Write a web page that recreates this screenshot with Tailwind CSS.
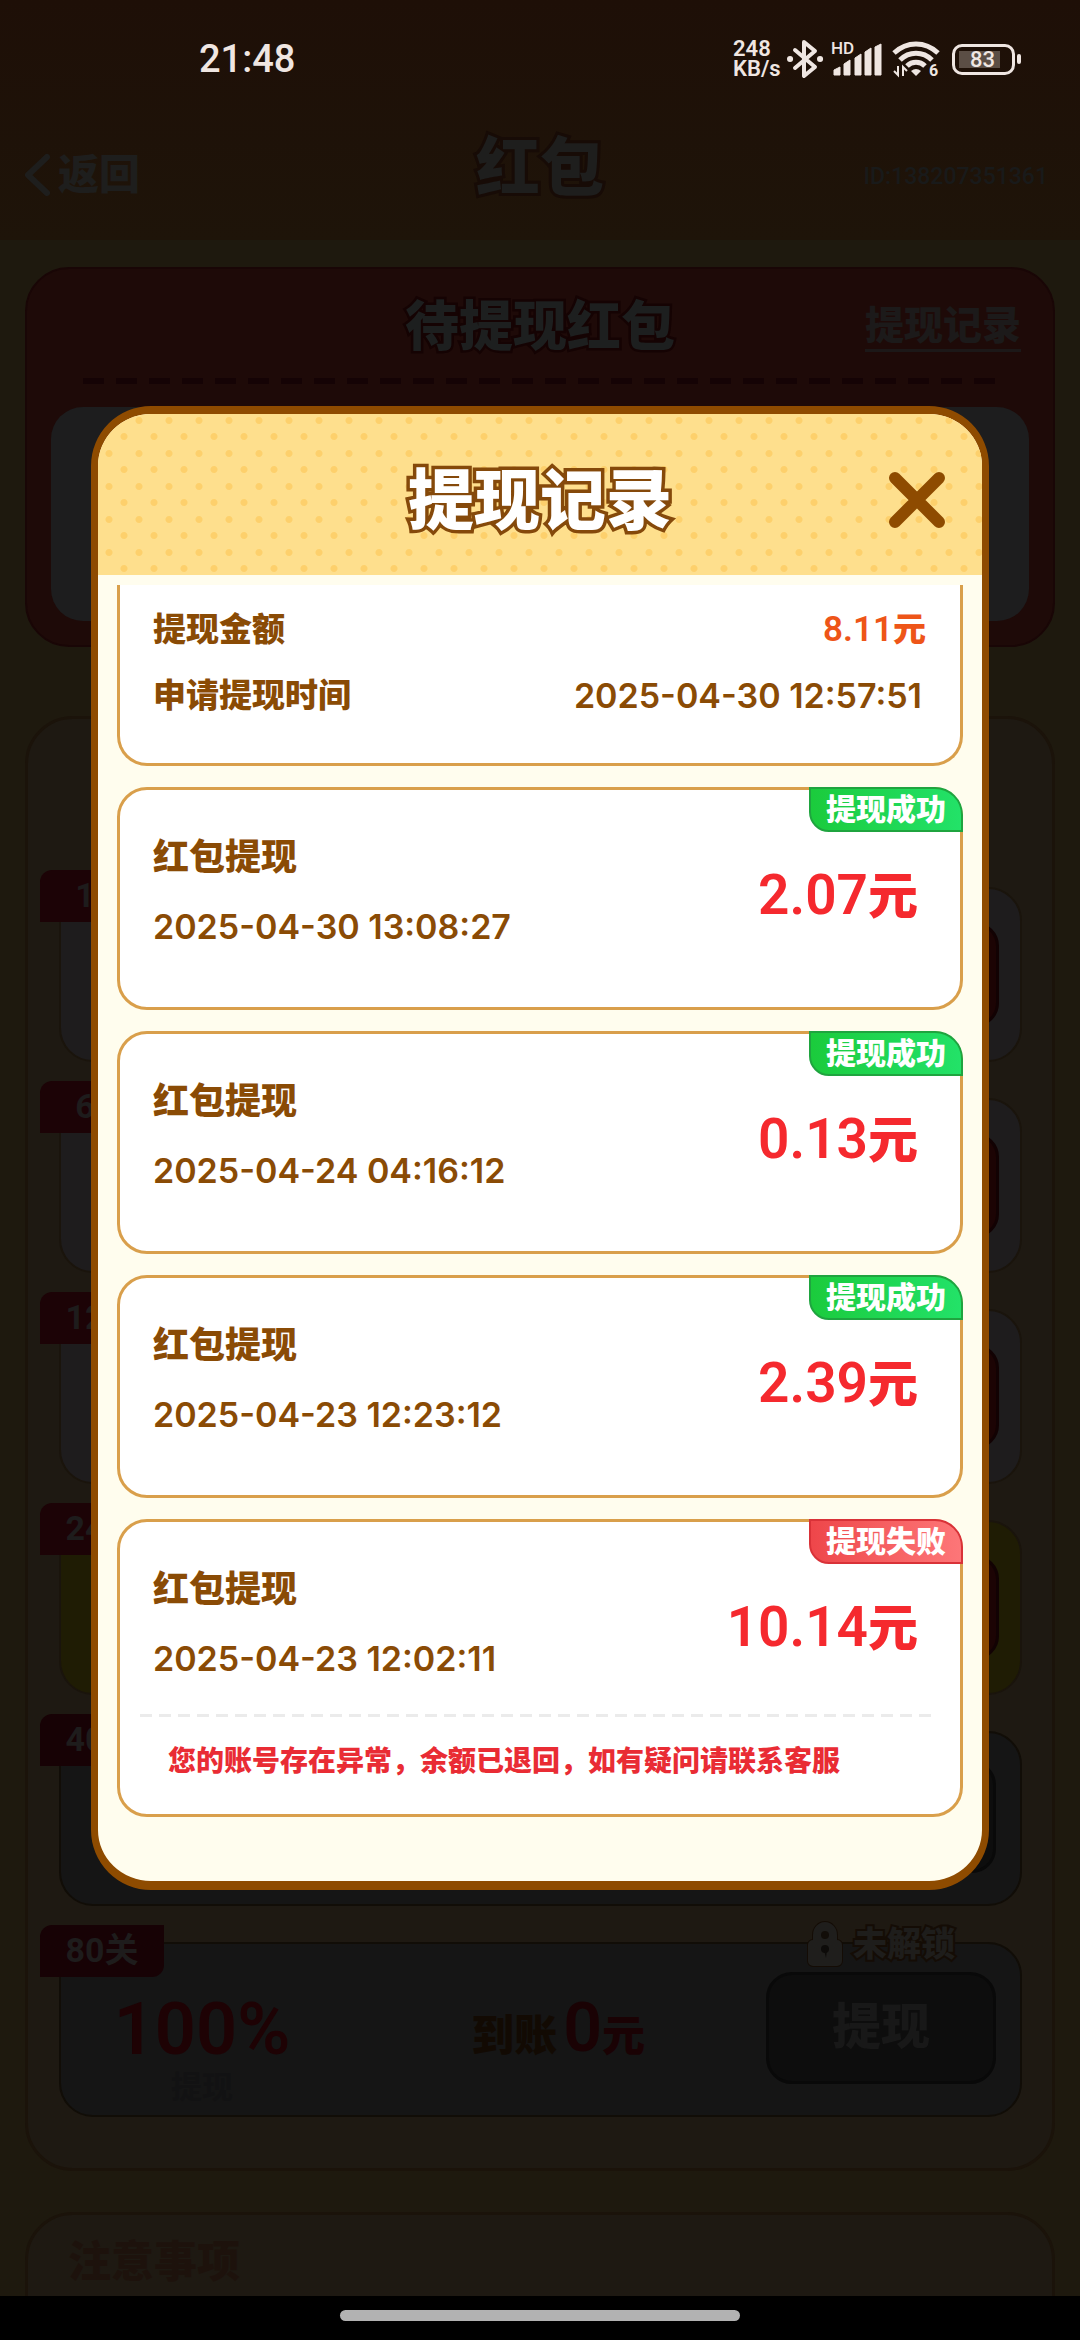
<!DOCTYPE html>
<html lang="zh-CN">
<head>
<meta charset="utf-8">
<meta name="viewport" content="width=device-width, initial-scale=1">
<title>提现记录</title>
<script src="https://cdn.jsdelivr.net/npm/@tailwindcss/browser@4"></script>
</head>
<body class="flex h-screen flex-col overflow-hidden bg-[#1e190e] font-['Roboto','Noto_Sans_CJK_SC',sans-serif] font-black">

<!-- Top of the page: status bar and title bar -->
<div class="shrink-0 bg-linear-to-b from-[#1e0f07] to-[#1e1409]">
  <div class="flex h-[118px] items-center justify-between pr-[59px] pl-[199px] text-[#efe6e2]">
    <time class="text-[38px] leading-[42px] font-medium">21:48</time>
    <div class="flex items-center">
      <div class="w-[53px] text-[22px] leading-5 font-semibold"><p>248</p><p>KB/s</p></div>
      <svg class="h-10 w-[38px]" viewBox="0 0 38 40" fill="none" stroke="currentColor" stroke-width="4" stroke-linejoin="round" stroke-linecap="round" aria-label="蓝牙"><path d="M9 11 29 28 18 37V3L29 12 9 29"/><path d="M4 20h.1M34 20h.1" stroke-width="6"/></svg>
      <svg class="ml-[7px] h-10 w-[52px]" viewBox="0 0 52 40" fill="currentColor" aria-label="信号"><text x="0" y="15" font-family="Roboto" font-size="17" font-weight="500">HD</text><path d="M3 31l6-3v8H3zM13 25l6-4v15h-6zM24 19l6-4v21h-6zM34 13l6-4v27h-6zM44 8l6-3v31h-6z" stroke="currentColor" stroke-linejoin="round"/></svg>
      <svg class="ml-2 h-11 w-[50px]" viewBox="0 -2 50 44" fill="none" stroke="currentColor" stroke-width="5" aria-label="无线网络"><path d="M3 14C16 2 34 2 47 14M9 21c9-9 23-9 32 0M16 27c5-5 13-5 18 0"/><path d="M20 32q5-4 10 0l-5 5z" fill="currentColor" stroke="none"/><path d="M7 27v9l-4-4M12 37v-9l4 4" stroke-width="2"/><text x="38" y="37" font-family="Roboto" font-size="16" font-weight="700" fill="currentColor" stroke="none">6</text></svg>
      <div class="ml-[11px] flex h-[31px] w-[63px] items-center rounded-[10px] border-[3px] border-[#efe6e2] p-1">
        <div class="h-[17px] w-[41px] bg-[#5b4e45] pl-[11px] text-[22px] leading-[18px] font-medium">83</div>
      </div>
      <div class="ml-0.5 h-2.5 w-1 rounded-sm bg-[#efe6e2]"></div>
    </div>
  </div>
  <header class="grid h-[122px] grid-cols-3 items-center px-6 pb-2 text-[#1e1e1d]">
    <a href="#" class="flex items-center gap-1 text-[41px] leading-[50px]">
      <svg class="h-11 w-[30px]" viewBox="0 0 30 44" fill="none" stroke="currentColor" stroke-width="6" stroke-linecap="round" stroke-linejoin="round" aria-hidden="true"><path d="M23 4 4 22l19 18"/></svg>返回
    </a>
    <h1 class="pb-3 text-center text-[64px] leading-[64px] [-webkit-text-stroke:6px_#170b06] [paint-order:stroke_fill]">红包</h1>
    <p class="pt-1 pr-2 text-right text-[23px] font-medium text-[#191a1a]">ID:138207351361</p>
  </header>
</div>

<!-- Page content under the dimmed mask -->
<main class="flex min-h-0 flex-1 flex-col overflow-hidden px-[25px] pt-[27px]">
  <section class="shrink-0 rounded-[44px] border-2 border-[#190606] bg-[#1e0a08] px-6 pb-6">
    <div class="grid h-[109px] grid-cols-4 items-center pt-2 text-[#1d1f1f]">
      <h2 class="col-span-2 col-start-2 text-center text-[54px] leading-[60px] [-webkit-text-stroke:5px_#150303] [paint-order:stroke_fill]">待提现红包</h2>
      <a href="#" class="mr-2 justify-self-end border-b-3 border-[#1c1818] text-[39px] leading-[45px] text-[#1c1a1a]">提现记录</a>
    </div>
    <div class="mx-8 h-1.5 bg-[repeating-linear-gradient(90deg,#150305_0_21px,transparent_21px_33px)]"></div>
    <div class="mt-[23px] h-[214px] rounded-[32px] bg-[#1d1d1e]"></div>
  </section>

  <section class="mt-[69px] flex shrink-0 flex-col gap-9 rounded-[48px] border-3 border-[#1b130a] bg-[#1e1912] pt-[168px] pr-[30px] pb-[51px] pl-[31px] text-[#1e1c1c]">
    <article class="relative flex h-[175px] items-center justify-end rounded-[34px] border-2 border-[#1a140c] bg-[#1e1c1d] pr-[21px]">
      <span class="absolute -top-[19px] -left-[21px] h-[52px] w-[124px] rounded-tl-xl rounded-br-xl bg-[#1c0306] text-center text-[34px] leading-[50px] font-bold">1关</span>
      <button aria-label="提现" class="h-[105px] w-[230px] rounded-3xl border-3 border-[#120203] bg-[#1c0404]"></button>
    </article>
    <article class="relative flex h-[175px] items-center justify-end rounded-[34px] border-2 border-[#1a140c] bg-[#1e1c1d] pr-[21px]">
      <span class="absolute -top-[19px] -left-[21px] h-[52px] w-[124px] rounded-tl-xl rounded-br-xl bg-[#1c0306] text-center text-[34px] leading-[50px] font-bold">6关</span>
      <button aria-label="提现" class="h-[105px] w-[230px] rounded-3xl border-3 border-[#120203] bg-[#1c0404]"></button>
    </article>
    <article class="relative flex h-[175px] items-center justify-end rounded-[34px] border-2 border-[#1a140c] bg-[#1e1c1d] pr-[21px]">
      <span class="absolute -top-[19px] -left-[21px] h-[52px] w-[124px] rounded-tl-xl rounded-br-xl bg-[#1c0306] text-center text-[34px] leading-[50px] font-bold">12关</span>
      <button aria-label="提现" class="h-[105px] w-[230px] rounded-3xl border-3 border-[#120203] bg-[#1c0404]"></button>
    </article>
    <article class="relative flex h-[175px] items-center justify-end rounded-[34px] border-2 border-[#1a140c] bg-[#1f1c04] pr-[21px]">
      <span class="absolute -top-[19px] -left-[21px] h-[52px] w-[124px] rounded-tl-xl rounded-br-xl bg-[#1c0306] text-center text-[34px] leading-[50px] font-bold">24关</span>
      <button aria-label="提现" class="h-[105px] w-[230px] rounded-3xl border-3 border-[#120203] bg-[#1c0404]"></button>
    </article>
    <article class="relative flex h-[175px] items-center justify-end rounded-[34px] border-2 border-[#110d07] bg-[#151515] pr-6 pb-1">
      <span class="absolute -top-[19px] -left-[21px] h-[52px] w-[124px] rounded-tl-xl rounded-br-xl bg-[#170205] text-center text-[34px] leading-[50px] font-bold">40关</span>
      <button aria-label="提现" class="h-[112px] w-[230px] rounded-3xl border-3 border-[#090909] bg-[#0d0d0d]"></button>
    </article>
    <article class="relative flex h-[175px] items-center justify-end rounded-[34px] border-2 border-[#110d07] bg-[#151515] pr-6 pb-1 pl-[52px]">
      <span class="absolute -top-[19px] -left-[21px] h-[52px] w-[124px] rounded-tl-xl rounded-br-xl bg-[#170205] text-center text-[34px] leading-[50px] font-bold">80关</span>
      <div class="mr-auto flex w-[178px] flex-col items-center gap-1 pt-11">
        <p class="text-[72px] leading-[72px] font-semibold text-[#1e0204]">100%</p>
        <p class="text-[31px] leading-9 font-bold text-[#121213]">提现</p>
      </div>
      <p class="mr-[121px] flex items-baseline pt-2 text-[43px] leading-[70px] text-[#120a03]">到账<span class="ml-1.5 text-[68px] font-semibold text-[#1a0204]">0</span><span class="text-[#1a0204]">元</span></p>
      <button class="h-[112px] w-[230px] rounded-[26px] border-3 border-[#090909] bg-[#0d0d0d] text-[49px] leading-[60px] text-[#181818]">提现</button>
      <div class="absolute -top-[25px] right-[65px] flex items-center gap-2 text-[34px] leading-[50px] text-[#1e1d1b] [-webkit-text-stroke:4px_#140c05] [paint-order:stroke_fill]">
        <svg class="h-[48px] w-[40px]" viewBox="0 0 40 48" aria-hidden="true"><path d="M8 20v-5a12 13 0 0 1 24 0v5a5 5 0 0 1 5 5v16a5 5 0 0 1-5 5H8a5 5 0 0 1-5-5V25a5 5 0 0 1 5-5z" fill="#1f1e1c" stroke="#140c05" stroke-width="2"/><circle cx="20" cy="15" r="4" fill="#120d08"/><circle cx="20" cy="29" r="4" fill="#0d0b09"/><path d="M19 30h3l-1 8z" fill="#0d0b09"/></svg>未解锁
      </div>
    </article>
  </section>

  <section class="mt-[41px] h-60 shrink-0 rounded-t-[48px] border-3 border-[#1b130a] bg-[#1e1912] px-10 pt-[15px]">
    <h2 class="text-[43px] leading-[64px] text-[#1d120c]">注意事项</h2>
  </section>
</main>

<!-- System navigation bar -->
<div class="flex h-11 shrink-0 justify-center bg-black pt-3.5">
  <div class="h-[11px] w-[400px] rounded-full bg-[#b2b2b2]"></div>
</div>

<!-- Withdrawal records dialog -->
<div class="fixed inset-0 flex items-start px-[91px] pt-[406px]">
  <section role="dialog" aria-labelledby="records-title" class="flex-1 overflow-hidden rounded-[60px] border-x-[7px] border-t-8 border-b-[9px] border-[#8e4b00] bg-[#fffdee] pb-[64px] text-[#8a4b05]">
    <header class="grid h-[161px] grid-cols-4 items-center bg-[#fedf8d] bg-[radial-gradient(circle,#fdd06c_3px,transparent_4px),radial-gradient(circle,#fdd06c_3px,transparent_4px)] bg-size-[30px_33px] bg-position-[-4px_-10px,11px_6px] pt-2.5">
      <h2 id="records-title" class="col-span-2 col-start-2 pt-1 text-center text-[66px] leading-[80px] text-white [-webkit-text-stroke:7px_#85490a] [paint-order:stroke_fill]">提现记录</h2>
      <button aria-label="关闭" class="mr-9 justify-self-end">
        <svg class="size-[58px]" viewBox="0 0 58 58" fill="none" stroke="#8e4b00" stroke-width="12" stroke-linecap="round" aria-hidden="true"><path d="M7 7l44 44M51 7 7 51"/></svg>
      </button>
    </header>

    <div class="flex flex-col gap-[21px] px-[19px] pt-2.5">
      <article class="flex h-[181px] flex-col rounded-b-[30px] border-x-3 border-b-3 border-[#d99f4b] bg-white pt-3 pr-[38px] pl-[33px] text-[33px] leading-[66px]">
        <div class="flex h-[66px] items-center justify-between"><span>提现金额</span><span class="-mr-1 text-[#ee5518]"><span class="text-[35px] font-semibold">8.11</span>元</span></div>
        <div class="flex h-[66px] items-center justify-between"><span>申请提现时间</span><time class="font-['Inter',sans-serif] text-[34px] font-semibold">2025-04-30 12:57:51</time></div>
      </article>

      <article class="relative flex h-[223px] justify-between rounded-[30px] border-3 border-[#d99f4b] bg-white pr-[42px] pl-[33px]">
        <div class="pt-[38px]">
          <h3 class="text-[36px] leading-[60px]">红包提现</h3>
          <time class="mt-1.5 block font-['Inter',sans-serif] text-[34px] leading-[66px] font-semibold">2025-04-30 13:08:27</time>
        </div>
        <p class="pt-[65px] text-[50px] leading-[80px] text-[#f5292e]"><span class="text-[55px] font-semibold">2.07</span>元</p>
        <span class="absolute -top-[3px] -right-[3px] h-[45px] w-[154px] rounded-tr-[28px] rounded-bl-[20px] border-2 border-[#1fa43f] bg-linear-to-r from-[#1bcb3c] to-[#23e268] text-center text-[30px] leading-[41px] text-white">提现成功</span>
      </article>

      <article class="relative flex h-[223px] justify-between rounded-[30px] border-3 border-[#d99f4b] bg-white pr-[42px] pl-[33px]">
        <div class="pt-[38px]">
          <h3 class="text-[36px] leading-[60px]">红包提现</h3>
          <time class="mt-1.5 block font-['Inter',sans-serif] text-[34px] leading-[66px] font-semibold">2025-04-24 04:16:12</time>
        </div>
        <p class="pt-[65px] text-[50px] leading-[80px] text-[#f5292e]"><span class="text-[55px] font-semibold">0.13</span>元</p>
        <span class="absolute -top-[3px] -right-[3px] h-[45px] w-[154px] rounded-tr-[28px] rounded-bl-[20px] border-2 border-[#1fa43f] bg-linear-to-r from-[#1bcb3c] to-[#23e268] text-center text-[30px] leading-[41px] text-white">提现成功</span>
      </article>

      <article class="relative flex h-[223px] justify-between rounded-[30px] border-3 border-[#d99f4b] bg-white pr-[42px] pl-[33px]">
        <div class="pt-[38px]">
          <h3 class="text-[36px] leading-[60px]">红包提现</h3>
          <time class="mt-1.5 block font-['Inter',sans-serif] text-[34px] leading-[66px] font-semibold">2025-04-23 12:23:12</time>
        </div>
        <p class="pt-[65px] text-[50px] leading-[80px] text-[#f5292e]"><span class="text-[55px] font-semibold">2.39</span>元</p>
        <span class="absolute -top-[3px] -right-[3px] h-[45px] w-[154px] rounded-tr-[28px] rounded-bl-[20px] border-2 border-[#1fa43f] bg-linear-to-r from-[#1bcb3c] to-[#23e268] text-center text-[30px] leading-[41px] text-white">提现成功</span>
      </article>

      <article class="relative h-[298px] rounded-[30px] border-3 border-[#d99f4b] bg-white">
        <div class="flex h-[192px] justify-between pr-[42px] pl-[33px]">
          <div class="pt-[38px]">
            <h3 class="text-[36px] leading-[60px]">红包提现</h3>
            <time class="mt-1.5 block font-['Inter',sans-serif] text-[34px] leading-[66px] font-semibold">2025-04-23 12:02:11</time>
          </div>
          <p class="pt-[65px] text-[50px] leading-[80px] text-[#f5292e]"><span class="text-[55px] font-semibold">10.14</span>元</p>
        </div>
        <div class="mr-[26px] ml-5 h-[3px] bg-[repeating-linear-gradient(90deg,#ebebeb_0_12px,transparent_12px_19px)]"></div>
        <p class="pt-[25px] pl-[48px] text-[28px] leading-10 text-[#e92c34]">您的账号存在异常，余额已退回，如有疑问请联系客服</p>
        <span class="absolute -top-[3px] -right-[3px] h-[45px] w-[154px] rounded-tr-[28px] rounded-bl-[20px] border-2 border-[#d93238] bg-linear-to-r from-[#ee464a] to-[#fd7678] text-center text-[30px] leading-[41px] text-white">提现失败</span>
      </article>
    </div>
  </section>
</div>
</body>
</html>
